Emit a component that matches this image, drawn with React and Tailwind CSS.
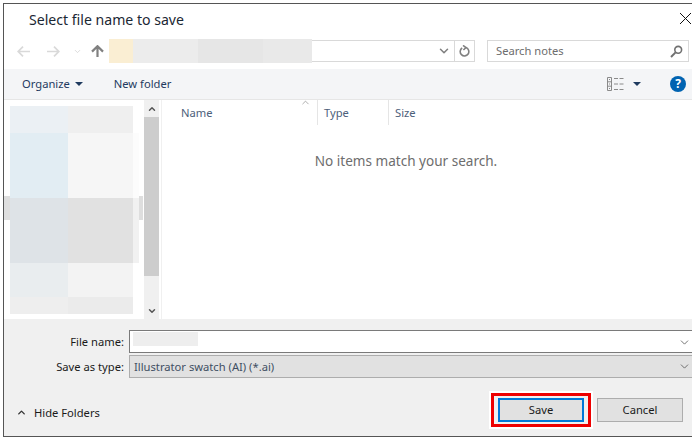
import React from 'react';
import { ChevronDown, ChevronUp } from 'lucide-react';

const Arrow = ({ flip, color }) => (
  <svg width="13" height="11" viewBox="0 0 13 11" fill="none" stroke={color} strokeWidth="1.7" className={flip ? 'rotate-180' : ''}>
    <path d="M1 5.5h12M6 .6 1.2 5.5 6 10.4" />
  </svg>
);

const Caret = () => (
  <svg width="8" height="4" viewBox="0 0 8 4" fill="#1f3a5f"><path d="M0 0h8L4 4z" /></svg>
);

const App = () => {
  return (
    <div className="w-[692px] h-[440px] bg-white pt-[3px] pl-[3px] overflow-hidden font-['Noto_Sans',sans-serif] text-[11.2px] text-[#1a1a1a]">
      <div className="h-[434px] border-l border-t border-b border-[#555555] flex flex-col">

        {/* Title */}
        <div className="h-[35px] shrink-0 flex items-center justify-between pl-[25px] pr-[1px] pb-[4px]">
          <span className="text-[14.1px] text-[#1b2733]">Select file name to save</span>
          <svg width="11" height="11" viewBox="0 0 11 11" stroke="#111111" strokeWidth="1" className="mb-[3px]"><path d="M0 0l11 11M11 0 0 11" /></svg>
        </div>

        {/* Nav row */}
        <div className="h-[24px] shrink-0 flex items-center">
          <div className="w-[105px] flex items-center pl-[13px]">
            <Arrow color="#d9d9d9" />
            <div className="ml-[17px]"><Arrow flip color="#d9d9d9" /></div>
            <ChevronDown className="w-[9px] h-[9px] ml-[13px] text-[#d0d0d0]" strokeWidth={2} />
            <svg width="13" height="12" viewBox="0 0 13 12" fill="none" stroke="#808080" strokeWidth="2.2" className="ml-[9px]">
              <path d="M6.5 12V1.5M1 6.6 6.5 1.2 12 6.6" />
            </svg>
          </div>
          <div className="w-[366px] h-[24px] flex items-center">
            <div className="w-[24px] h-full bg-[#faeed3]"></div>
            <div className="w-[65px] h-full bg-[#ececec]"></div>
            <div className="w-[65px] h-full bg-[#e6e6e6]"></div>
            <div className="w-[49px] h-full bg-[#e9e9e9]"></div>
            <div className="flex-1 h-[22px] border-y border-r border-[#d9d9d9] flex justify-end items-center">
              <ChevronDown className="w-[14px] h-[14px] text-[#808080] mr-[3px]" strokeWidth={2.6} />
              <div className="w-[20px] h-full border-l border-[#d9d9d9] flex items-center justify-center">
                <svg width="11" height="12" viewBox="0 0 11 12" fill="none" stroke="#808080" strokeWidth="1.6">
                  <path d="M7 2.6A4.3 4.3 0 1 1 3.2 3" />
                  <path d="M4 .4 7 2.6 4.4 5" />
                </svg>
              </div>
            </div>
          </div>
          <div className="ml-[12px] w-[202px] h-[22px] border border-[#d9d9d9] flex items-center justify-between pl-[8px] pr-[5px]">
            <span className="text-[#6d6d6d]">Search notes</span>
            <svg width="13" height="13" viewBox="0 0 13 13" fill="none" stroke="#707070" strokeWidth="1.6"><circle cx="8.2" cy="4.8" r="3.4" /><path d="M5.6 7.4 1 12" strokeWidth="2" /></svg>
          </div>
        </div>

        {/* Toolbar */}
        <div className="mt-[6px] h-[31px] shrink-0 bg-[#f4f5f7] border-b border-[#e6e6e6] flex items-center pl-[18px] pr-[6px] text-[#1f3a5f]">
          <span>Organize</span>
          <div className="ml-[5px]"><Caret /></div>
          <span className="ml-[31px]">New folder</span>
          <svg width="17" height="14" viewBox="0 0 17 14" fill="none" className="ml-auto" stroke="#8a8a8a">
            <path d="M.5.5h4v13h-4zM.5 4.8h4M.5 9.2h4" />
            <path d="M7 1.5h4M12.5 1.5h4M7 7h4M12.5 7h4M7 12.5h4M12.5 12.5h4" />
            <path d="M2 2h1v1H2zM2 6.5h1v1H2zM2 11h1v1H2z" fill="#8a8a8a" stroke="none" />
          </svg>
          <div className="ml-[9px]"><Caret /></div>
          <div className="ml-[29px] w-[16px] h-[16px] rounded-full bg-[#0063b1] text-white font-bold text-[12px] leading-[16px] text-center">?</div>
        </div>

        {/* Content */}
        <div className="h-[219px] shrink-0 flex">
          <div className="w-[140px] flex items-start pt-[6px]">
            <div className="w-[6px] h-[24px] mt-[90px] bg-[#dedede]"></div>
            <div className="grid grid-cols-[58px_65px_6px] grid-rows-[27px_65px_65px_34px_17px]">
              <div className="bg-[#ebf0f4]"></div>
              <div className="bg-[#efefef]"></div>
              <div></div>
              <div className="bg-[#e2edf3]"></div>
              <div className="bg-[#f6f6f6]"></div>
              <div className="bg-[#fcfcfc]"></div>
              <div className="bg-[#dee3e7]"></div>
              <div className="bg-[#e1e1e1]"></div>
              <div className="bg-[#f1f1f1]"></div>
              <div className="bg-[#e9edef]"></div>
              <div className="bg-[#f3f3f3]"></div>
              <div></div>
              <div className="bg-[#eeeeee]"></div>
              <div className="bg-[#ebebeb]"></div>
              <div></div>
            </div>
            <div className="w-[4px] h-[24px] mt-[90px] bg-[#dedede]"></div>
          </div>

          <div className="w-[15px] bg-[#f0f0f0] flex flex-col items-center">
            <div className="h-[17px] flex items-center"><ChevronUp className="w-[10px] h-[10px] text-[#555555]" strokeWidth={3.5} /></div>
            <div className="w-full h-[159px] bg-[#cdcdcd]"></div>
            <div className="flex-1 flex items-end pb-[3px]"><ChevronDown className="w-[10px] h-[10px] text-[#555555]" strokeWidth={3.5} /></div>
          </div>

          <div className="flex-1 ml-[2px] border-l border-[#f0f0f0]">
            <div className="flex h-[25px] text-[#4c607a]">
              <div className="w-[156px] border-r border-[#e5e5e5] pl-[19px] pt-[5px] relative">
                Name
                <ChevronUp className="absolute right-[6px] top-[-3px] w-[11px] h-[11px] text-[#8a8a8a]" strokeWidth={1.5} />
              </div>
              <div className="w-[71px] border-r border-[#e5e5e5] pl-[6px] pt-[5px]">Type</div>
              <div className="pl-[6px] pt-[5px]">Size</div>
            </div>
            <div className="mt-[26px] text-center pr-[42px] text-[13.55px] text-[#6d6d6d]">No items match your search.</div>
          </div>
        </div>

        {/* Footer */}
        <div className="flex-1 bg-[#f0f0f0] flex flex-col">
          <div className="mt-[11px] flex items-center h-[23px]">
            <span className="w-[120px] text-right pt-[2px]">File name:</span>
            <div className="ml-[5px] flex-1 h-[23px] bg-white border-t border-b border-l border-[#7a7a7a] flex items-start justify-between pl-[3px] pt-[1px]">
              <div className="w-[65px] h-[14px] bg-[#eeeeee]"></div>
              <ChevronDown className="w-[13px] h-[13px] mt-[4px] mr-[1px] text-[#555555]" strokeWidth={1.5} />
            </div>
          </div>
          <div className="mt-[2px] flex items-center h-[23px]">
            <span className="w-[120px] text-right pt-[2px]">Save as type:</span>
            <div className="ml-[5px] flex-1 h-[23px] bg-[#e1e1e1] border-t border-b border-l border-[#adadad] flex items-center justify-between pl-[4px] text-[#3f4f63]">
              <span className="pt-[1px]">Illustrator swatch (AI) (*.ai)</span>
              <ChevronDown className="w-[13px] h-[13px] mr-[1px] text-[#555555]" strokeWidth={1.5} />
            </div>
          </div>
          <div className="mt-[13px] flex items-center">
            <div className="flex items-center mt-[6px]">
              <ChevronUp className="ml-[12px] w-[11px] h-[11px] text-[#333333]" strokeWidth={3} />
              <span className="ml-[7px]">Hide Folders</span>
            </div>
            <div className="ml-auto mr-[9px] flex items-center">
              <div className="w-[104px] h-[38px] border-2 border-white">
                <div className="w-full h-full border-[3px] border-[#ee0000] flex items-center justify-center">
                  <div className="w-[86px] h-[24px] border-2 border-[#0078d7] bg-[#e1e1e1] flex items-center justify-center pt-[1px]">Save</div>
                </div>
              </div>
              <div className="ml-[4px] w-[86px] h-[24px] border border-[#adadad] bg-[#e1e1e1] flex items-center justify-center pt-[1px]">Cancel</div>
            </div>
          </div>
        </div>
      </div>
    </div>
  );
};

export default App;
